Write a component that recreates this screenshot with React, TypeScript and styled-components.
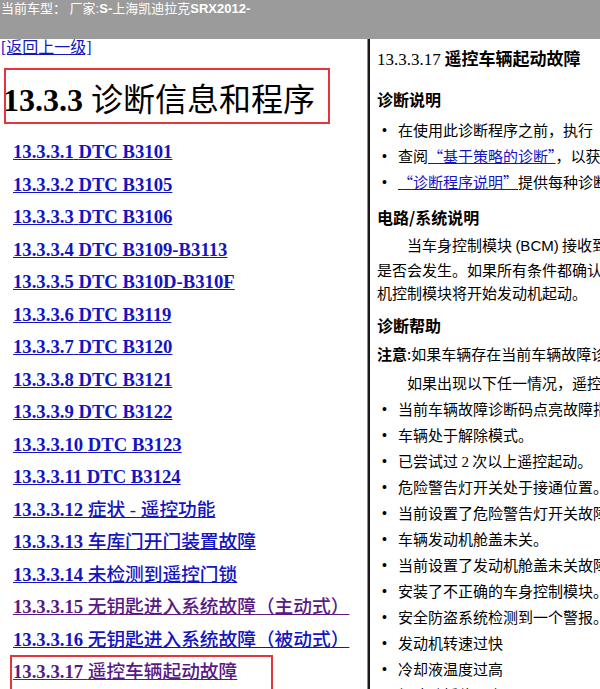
import React from "react";
import styled, { createGlobalStyle } from "styled-components";

const Global = createGlobalStyle`
  html, body { margin: 0; padding: 0; background: #fff; }
  body { font-family: "Liberation Serif", "Noto Sans CJK SC", serif; }
`;

const Page = styled.div`
  width: 600px;
  height: 689px;
  display: flex;
  flex-direction: column;
  overflow: hidden;
  background: #fff;
`;

const TopBar = styled.div`
  height: 39px;
  flex: none;
  background: #9b9b9b;
  color: #fff;
  font-family: "Liberation Sans", "Noto Sans CJK SC", sans-serif;
  font-size: 13px;
  line-height: 16px;
  padding: 1px 0 0 1px;
  box-sizing: border-box;
  white-space: nowrap;
`;

const Strong = styled.b`
  font-weight: bold;
`;

const Body = styled.div`
  flex: 1;
  min-height: 0;
  display: flex;
`;

const LeftPane = styled.div`
  width: 367px;
  flex: none;
  border-right: 1px solid #8a8a8a;
  overflow: hidden;
`;

const BackLink = styled.a`
  display: inline-block;
  margin-left: 1px;
  height: 18px;
  line-height: 18px;
  font-size: 16px;
  color: #1414c0;
  text-decoration: underline;
  font-family: "Liberation Serif", "Noto Sans CJK SC", serif;
`;

const TitleWrap = styled.div`
  position: relative;
  margin-top: 11px;
  height: 56px;
`;

const MainTitle = styled.h1`
  margin: 0 0 0 3px;
  padding-top: 8px;
  font-size: 32px;
  line-height: 48px;
  font-weight: normal;
  color: #000;
  white-space: nowrap;
`;

const Num = styled.span`
  font-weight: bold;
`;

const Annot = styled.div<{ $l: number; $t: number; $w: number; $h: number }>`
  position: absolute;
  left: ${(p) => p.$l}px;
  top: ${(p) => p.$t}px;
  width: ${(p) => p.$w}px;
  height: ${(p) => p.$h}px;
  border: 2px solid #e4363a;
  box-sizing: border-box;
  pointer-events: none;
`;

const Toc = styled.div`
  position: relative;
  margin-top: 12px;
  padding-left: 13px;
`;

const TocItem = styled.div`
  height: 32.5px;
  line-height: 32.5px;
  white-space: nowrap;
`;

const TocLink = styled.a<{ $visited?: boolean }>`
  font-size: 18.7px;
  font-weight: bold;
  color: ${(p) => (p.$visited ? "#5a1a86" : "#1414c0")};
  text-decoration: underline;
`;

const TocCJK = styled.span`
  font-weight: 500;
`;

const RightPane = styled.div`
  flex: 1;
  min-width: 0;
  overflow: hidden;
  border-left: 2px solid #1a1a1a;
  padding: 7px 0 0 7px;
  white-space: nowrap;
  color: #000;
  font-family: "Noto Sans CJK SC", sans-serif;
  font-size: 15px;
`;

const DocTitle = styled.div`
  font-size: 17px;
  line-height: 24px;
  height: 24px;
`;

const SerifNum = styled.span`
  font-family: "Liberation Serif", serif;
  font-weight: normal;
`;

const BoldCJK = styled.span`
  font-weight: bold;
`;

const SectionHead = styled.div<{ $mt: number }>`
  margin-top: ${(p) => p.$mt}px;
  font-size: 16px;
  font-weight: bold;
  line-height: 24px;
  height: 24px;
`;

const BulletList = styled.ul<{ $mt: number }>`
  list-style: none;
  margin: ${(p) => p.$mt}px 0 0 0;
  padding: 0;
`;

const Bullet = styled.li`
  display: flex;
  height: 26px;
  line-height: 26px;
`;

const Dot = styled.span`
  width: 21px;
  flex: none;
  padding-left: 5px;
  box-sizing: border-box;
  font-family: "Liberation Sans", sans-serif;
  font-size: 14px;
`;

const Para = styled.div<{ $mt: number; $indent?: boolean; $lh: number }>`
  margin-top: ${(p) => p.$mt}px;
  line-height: ${(p) => p.$lh}px;
  text-indent: ${(p) => (p.$indent ? "30px" : "0")};
`;

const Line = styled.div<{ $indent?: boolean }>`
  text-indent: ${(p) => (p.$indent ? "30px" : "0")};
`;

const Sans = styled.span`
  font-family: "Liberation Sans", sans-serif;
`;

const DocLink = styled.a`
  color: #1414c0;
  text-decoration: underline;
`;

const tocItems: { num: string; text: string; cjk?: boolean; visited?: boolean }[] = [
  { num: "13.3.3.1", text: "DTC B3101" },
  { num: "13.3.3.2", text: "DTC B3105" },
  { num: "13.3.3.3", text: "DTC B3106" },
  { num: "13.3.3.4", text: "DTC B3109-B3113" },
  { num: "13.3.3.5", text: "DTC B310D-B310F" },
  { num: "13.3.3.6", text: "DTC B3119" },
  { num: "13.3.3.7", text: "DTC B3120" },
  { num: "13.3.3.8", text: "DTC B3121" },
  { num: "13.3.3.9", text: "DTC B3122" },
  { num: "13.3.3.10", text: "DTC B3123" },
  { num: "13.3.3.11", text: "DTC B3124" },
  { num: "13.3.3.12", text: "症状 - 遥控功能", cjk: true },
  { num: "13.3.3.13", text: "车库门开门装置故障", cjk: true },
  { num: "13.3.3.14", text: "未检测到遥控门锁", cjk: true },
  { num: "13.3.3.15", text: "无钥匙进入系统故障（主动式）", cjk: true, visited: true },
  { num: "13.3.3.16", text: "无钥匙进入系统故障（被动式）", cjk: true },
  { num: "13.3.3.17", text: "遥控车辆起动故障", cjk: true, visited: true },
];

const conditions: React.ReactNode[] = [
  "当前车辆故障诊断码点亮故障指示灯。",
  "车辆处于解除模式。",
  <>
    已尝试过 <SerifNum>2</SerifNum> 次以上遥控起动。
  </>,
  "危险警告灯开关处于接通位置。",
  "当前设置了危险警告灯开关故障。",
  "车辆发动机舱盖未关。",
  "当前设置了发动机舱盖未关故障。",
  "安装了不正确的车身控制模块。",
  "安全防盗系统检测到一个警报。",
  "发动机转速过快",
  "冷却液温度过高",
  "加速踏板位置大于零",
];

export default function App() {
  return (
    <>
      <Global />
      <Page>
        <TopBar>
          当前车型： 厂家:<Strong>S-</Strong>上海凯迪拉克<Strong>SRX2012-</Strong>
        </TopBar>
        <Body>
          <LeftPane>
            <BackLink href="#">[返回上一级]</BackLink>
            <TitleWrap>
              <MainTitle>
                <Num>13.3.3</Num> 诊断信息和程序
              </MainTitle>
              <Annot $l={4} $t={0} $w={326} $h={56} />
            </TitleWrap>
            <Toc>
              {tocItems.map((it) => (
                <TocItem key={it.num}>
                  <TocLink href="#" $visited={it.visited}>
                    {it.num} {it.cjk ? <TocCJK>{it.text}</TocCJK> : it.text}
                  </TocLink>
                </TocItem>
              ))}
              <Annot $l={10} $t={519} $w={263} $h={40} />
            </Toc>
          </LeftPane>
          <RightPane>
            <DocTitle>
              <SerifNum>13.3.3.17</SerifNum> <BoldCJK>遥控车辆起动故障</BoldCJK>
            </DocTitle>
            <SectionHead $mt={17}>诊断说明</SectionHead>
            <BulletList $mt={6}>
              <Bullet>
                <Dot>•</Dot>
                <span>在使用此诊断程序之前，执行“诊断系统检查 - 车辆”。</span>
              </Bullet>
              <Bullet>
                <Dot>•</Dot>
                <span>
                  查阅<DocLink href="#">“基于策略的诊断”</DocLink>，以获得诊断方法的概述。
                </span>
              </Bullet>
              <Bullet>
                <Dot>•</Dot>
                <span>
                  {" "}
                  <DocLink href="#">“诊断程序说明”</DocLink>提供每种诊断类别的概述。
                </span>
              </Bullet>
            </BulletList>
            <SectionHead $mt={10}>电路/系统说明</SectionHead>
            <Para $mt={4} $lh={23.5}>
              <Line $indent>
                当车身控制模块 <Sans>(BCM)</Sans> 接收到遥控起动请求时，将检查各项条件以确定遥控起动
              </Line>
              <Line>是否会发生。如果所有条件都确认满足，车身控制模块将向发动机控制模块发送信息，发动</Line>
              <Line>机控制模块将开始发动机起动。</Line>
            </Para>
            <SectionHead $mt={8}>诊断帮助</SectionHead>
            <Para $mt={4} $lh={26}>
              <BoldCJK>注意</BoldCJK>:如果车辆存在当前车辆故障诊断码，则遥控起动功能将被禁止。
            </Para>
            <Para $mt={3} $lh={26} $indent>
              如果出现以下任一情况，遥控起动将不会发生或将中止：
            </Para>
            <BulletList $mt={0}>
              {conditions.map((c, i) => (
                <Bullet key={i}>
                  <Dot>•</Dot>
                  <span>{c}</span>
                </Bullet>
              ))}
            </BulletList>
          </RightPane>
        </Body>
      </Page>
    </>
  );
}
